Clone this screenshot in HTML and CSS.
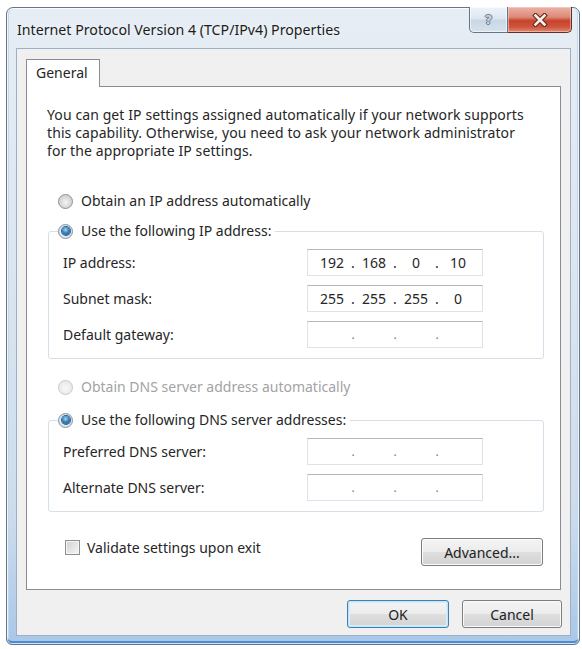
FILE: index.html
```html
<!DOCTYPE html>
<html lang="en">
<head>
<meta charset="utf-8">
<title>Internet Protocol Version 4 (TCP/IPv4) Properties</title>
<link rel="stylesheet" href="styles.css">
</head>
<body>
<div class="window">
  <div class="titlebar">
    <span class="title">Internet Protocol Version 4 (TCP/IPv4) Properties</span>
    <div class="caption-buttons">
      <div class="cap help"><span class="qmark">?</span></div>
      <div class="cap close">
        <svg width="16" height="14" viewBox="0 0 16 14">
          <path d="M3.5 2.5 L12.5 11.5 M12.5 2.5 L3.5 11.5" stroke="#5e2a20" stroke-width="4.6" stroke-linecap="square" fill="none"/>
          <path d="M3.5 2.5 L12.5 11.5 M12.5 2.5 L3.5 11.5" stroke="#fbeeea" stroke-width="2.6" stroke-linecap="square" fill="none"/>
        </svg>
      </div>
    </div>
  </div>
  <div class="client">
    <div class="tabs"><div class="tab">General</div></div>
    <div class="panel">
      <p class="desc">You can get IP settings assigned automatically if your network supports<br>this capability. Otherwise, you need to ask your network administrator<br>for the appropriate IP settings.</p>

      <div class="option first"><span class="radio"></span><span>Obtain an IP address automatically</span></div>

      <fieldset class="group">
        <legend><span class="option legend-opt"><span class="radio checked"></span><span>Use the following IP address:</span></span></legend>
        <div class="rows">
          <div class="row"><span class="label">IP address:</span>
            <div class="ipfield"><span class="seg">192</span><span class="dot">.</span><span class="seg">168</span><span class="dot">.</span><span class="seg">0</span><span class="dot">.</span><span class="seg">10</span></div>
          </div>
          <div class="row"><span class="label">Subnet mask:</span>
            <div class="ipfield"><span class="seg">255</span><span class="dot">.</span><span class="seg">255</span><span class="dot">.</span><span class="seg">255</span><span class="dot">.</span><span class="seg">0</span></div>
          </div>
          <div class="row"><span class="label">Default gateway:</span>
            <div class="ipfield empty"><span class="seg"></span><span class="dot">.</span><span class="seg"></span><span class="dot">.</span><span class="seg"></span><span class="dot">.</span><span class="seg"></span></div>
          </div>
        </div>
      </fieldset>

      <div class="option second disabled"><span class="radio disabled"></span><span>Obtain DNS server address automatically</span></div>

      <fieldset class="group dns">
        <legend><span class="option legend-opt"><span class="radio checked"></span><span>Use the following DNS server addresses:</span></span></legend>
        <div class="rows">
          <div class="row"><span class="label">Preferred DNS server:</span>
            <div class="ipfield empty"><span class="seg"></span><span class="dot">.</span><span class="seg"></span><span class="dot">.</span><span class="seg"></span><span class="dot">.</span><span class="seg"></span></div>
          </div>
          <div class="row"><span class="label">Alternate DNS server:</span>
            <div class="ipfield empty"><span class="seg"></span><span class="dot">.</span><span class="seg"></span><span class="dot">.</span><span class="seg"></span><span class="dot">.</span><span class="seg"></span></div>
          </div>
        </div>
      </fieldset>

      <div class="bottom-row">
        <div class="check-row"><span class="checkbox"></span><span>Validate settings upon exit</span></div>
        <div class="btn advanced">Advanced...</div>
      </div>
    </div>
    <div class="dialog-buttons">
      <div class="btn ok">OK</div>
      <div class="btn cancel">Cancel</div>
    </div>
  </div>
</div>
</body>
</html>
```
FILE: styles.css
```css
* { box-sizing: border-box; }
html, body { margin: 0; padding: 0; background: #fff; }
body {
  font-family: "Noto Sans", "Open Sans", "Liberation Sans", sans-serif;
  font-size: 14px;
  color: #262626;
}

.window {
  margin: 7px 0 0 6px;
  width: 574px;
  height: 638px;
  border: 1px solid #66768a;
  border-radius: 7px 7px 6px 6px;
  background: linear-gradient(to bottom, #e6edf4 0%, #dce6f0 40%, #cddcec 80%, #a9c7e8 100%);
  box-shadow: inset 0 0 0 1px rgba(255,255,255,0.75), inset 0 -3px 0 #4b8cd2, inset 2px 0 0 #c2d6ec, inset -2px 0 0 #c2d6ec;
  display: flex;
  flex-direction: column;
  padding: 0 8px 8px 9px;
}

.titlebar {
  height: 40px;
  display: flex;
  justify-content: space-between;
  align-items: flex-start;
}
.title {
  padding: 12px 0 0 1px;
  line-height: 20px;
  font-size: 14.2px;
  color: #1c1c1c;
  white-space: nowrap;
  text-shadow: 0 0 6px rgba(255,255,255,0.9);
}
.caption-buttons {
  display: flex;
  margin: -1px -1px 0 0;
}
.cap {
  height: 26px;
  display: flex;
  align-items: center;
  justify-content: center;
}
.cap.help {
  width: 39px;
  border: 1px solid #66768a;
  border-top: none;
  border-radius: 0 0 0 5px;
  background: linear-gradient(to bottom, #eef3f8 0%, #dde6ef 48%, #c9d6e4 52%, #d7e2ec 100%);
  box-shadow: inset 0 0 0 1px rgba(255,255,255,0.6);
}
.qmark {
  font-family: "DejaVu Sans", sans-serif;
  font-weight: bold;
  font-size: 13px;
  line-height: 14px;
  color: #c9d3de;
  text-shadow: 1px 0 0 #6f7f92, -1px 0 0 #6f7f92, 0 1px 0 #6f7f92, 0 -1px 0 #6f7f92;
}
.cap.close {
  width: 64px;
  border: 1px solid #5b3128;
  border-left: none;
  border-top: none;
  border-radius: 0 0 5px 0;
  background: linear-gradient(to bottom, #ebb2a6 0%, #dd8a78 40%, #c8432c 55%, #cf553d 80%, #e08b75 100%);
  box-shadow: inset 0 0 0 1px rgba(255,220,210,0.5);
}

.client {
  flex: 1;
  background: #f0f0f0;
  border: 1px solid #9fb0c4;
  padding: 10px 9px 7px;
  display: flex;
  flex-direction: column;
}

.tabs { display: flex; }
.tab {
  position: relative;
  z-index: 1;
  width: 74px;
  height: 28px;
  margin-bottom: -1px;
  border: 1px solid #898c95;
  border-bottom: none;
  background: #fff;
  padding-left: 9px;
  line-height: 26px;
}

.panel {
  flex: 1;
  background: #fff;
  border: 1px solid #898c95;
  padding: 19px 16px 0 20px;
  display: flex;
  flex-direction: column;
}

.desc {
  margin: 0;
  line-height: 18px;
  white-space: nowrap;
  letter-spacing: 0.1px;
}

.option {
  display: flex;
  align-items: center;
  height: 18px;
  line-height: 18px;
  gap: 8px;
  white-space: nowrap;
}
.option.first { margin: 32px 0 0 11px; }
.option.second { margin: 19px 0 0 11px; }
.option.disabled { color: #a3a3a3; }

.radio {
  flex: none;
  width: 15px;
  height: 15px;
  border-radius: 50%;
  border: 1px solid #8a9199;
  background: radial-gradient(circle at 50% 55%, #f4f4f4 0%, #dcdcdc 45%, #c4c6c9 100%);
  display: flex;
  align-items: center;
  justify-content: center;
}
.radio.disabled {
  border-color: #c6c9cd;
  background: radial-gradient(circle at 50% 55%, #f8f8f8 0%, #ececec 60%, #dedede 100%);
}
.radio.checked {
  border-color: #7f93a8;
  background: radial-gradient(circle at 50% 50%, #f3f7fa 0%, #dfe8ef 60%, #c4d2de 100%);
}
.radio.checked::after {
  content: "";
  width: 8px;
  height: 8px;
  border-radius: 50%;
  background: radial-gradient(circle at 45% 35%, #a6d8f5 0%, #3a84bf 45%, #14466f 100%);
  box-shadow: 0 0 0 1px #2e5f88;
}

.group {
  margin: 12px 0 0 1px;
  min-width: 0;
  border: 1px solid #d5dfe5;
  border-radius: 3px;
  padding: 9px 60px 10px 14px;
}
.group.dns { margin-top: 15px; }
.group legend {
  padding: 0 4px 0 0;
  margin-left: -5px;
}
.legend-opt { height: 18px; }

.rows {
  display: flex;
  flex-direction: column;
  gap: 9px;
}
.row {
  display: flex;
  align-items: center;
  height: 27px;
}
.label {
  width: 244px;
  flex: none;
  white-space: nowrap;
}
.ipfield {
  width: 176px;
  height: 27px;
  background: #fff;
  border: 1px solid #dfe3e8;
  border-top-color: #b3b6bc;
  display: flex;
  align-items: center;
  padding-left: 6px;
}
.seg {
  width: 36px;
  text-align: center;
  flex: none;
}
.dot {
  width: 6px;
  text-align: center;
  flex: none;
}
.ipfield.empty .dot { color: #7a7a7a; font-size: 12px; }

.bottom-row {
  margin-top: 26px;
  display: flex;
  justify-content: space-between;
  align-items: flex-start;
}
.check-row {
  margin-left: 18px;
  display: flex;
  align-items: center;
  height: 18px;
  gap: 7px;
  white-space: nowrap;
}
.checkbox {
  width: 15px;
  height: 15px;
  border: 1px solid #8e8f8f;
  background: linear-gradient(135deg, #cfd1d3 0%, #e6e7e8 60%, #f7f7f7 100%);
  box-shadow: inset 0 0 0 1px #f4f4f4;
}

.btn {
  height: 28px;
  border: 1px solid #7d7d7d;
  border-radius: 3px;
  background: linear-gradient(to bottom, #f4f4f4 0%, #ececec 48%, #dedede 52%, #d3d3d3 100%);
  box-shadow: inset 0 0 0 1px #fbfbfb;
  display: flex;
  align-items: center;
  justify-content: center;
  color: #222;
}
.btn.advanced { width: 122px; margin-right: 1px; }

.dialog-buttons {
  margin-top: 10px;
  display: flex;
  justify-content: flex-end;
  gap: 13px;
  margin-right: -1px;
}
.btn.ok {
  width: 102px;
  border-color: #3f80b3;
  box-shadow: inset 0 0 0 1px #bfe5f8, inset 0 0 0 2px #d6effb;
}
.btn.cancel { width: 100px; }
```
